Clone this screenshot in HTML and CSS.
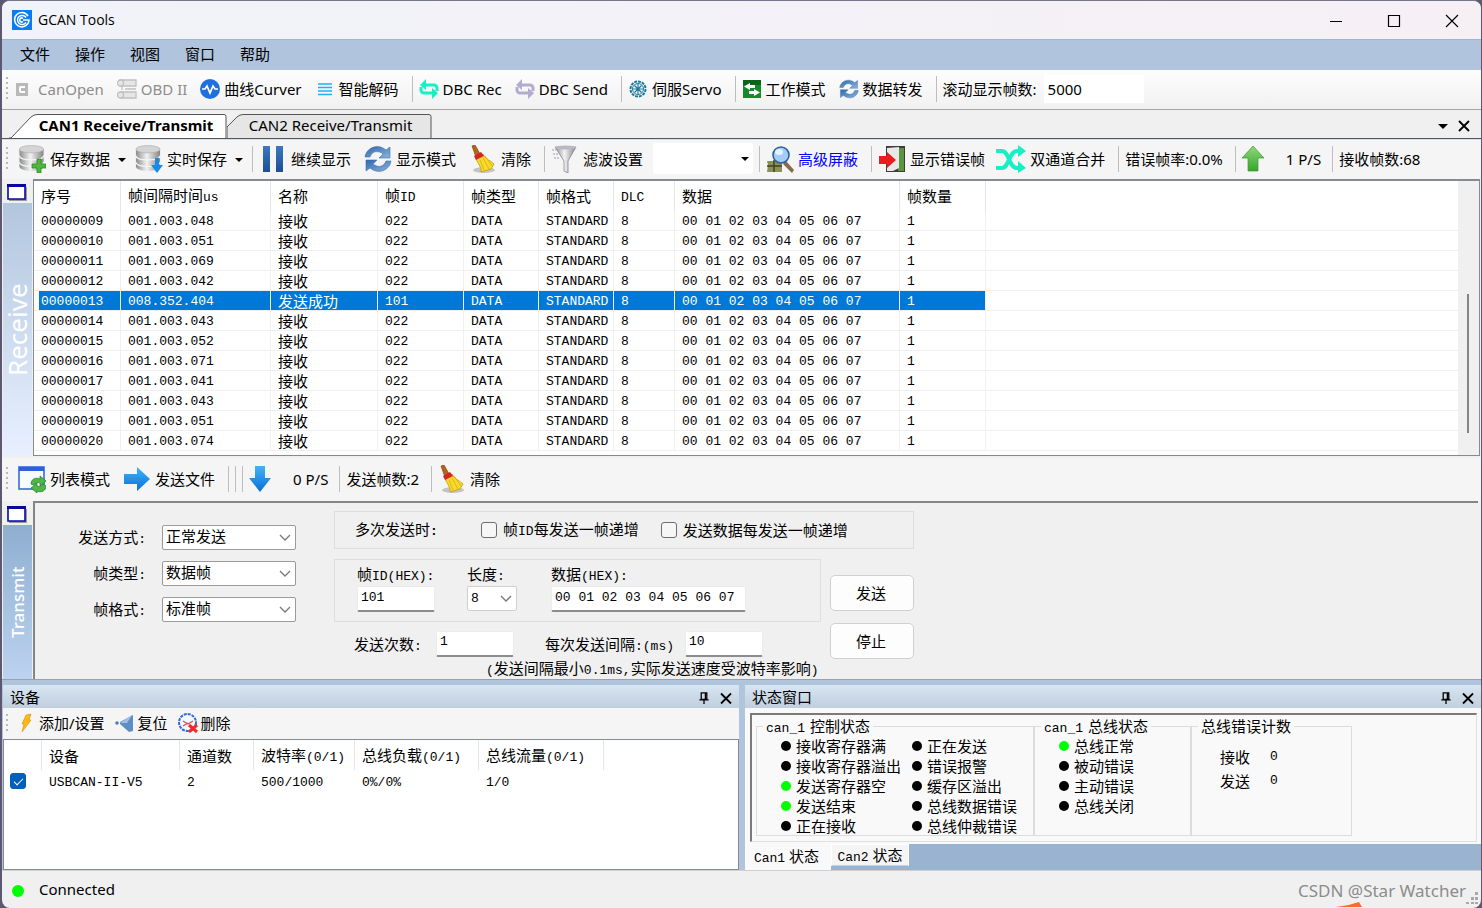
FILE: index.html
```html
<!DOCTYPE html>
<html lang="zh-CN">
<head>
<meta charset="utf-8">
<title>GCAN Tools</title>
<link rel="stylesheet" href="styles.css">
</head>
<body>
<svg class="defs" aria-hidden="true">
  <defs>
    <linearGradient id="steel" x1="0" x2="1"><stop offset="0" stop-color="#8c8c8c"/><stop offset=".45" stop-color="#f2f2f2"/><stop offset="1" stop-color="#858585"/></linearGradient>
    <linearGradient id="blueV" x1="0" y1="0" x2="0" y2="1"><stop offset="0" stop-color="#3fb4fb"/><stop offset="1" stop-color="#0a6fd6"/></linearGradient>
    <linearGradient id="greenV" x1="0" y1="0" x2="0" y2="1"><stop offset="0" stop-color="#8fd97a"/><stop offset="1" stop-color="#36a52c"/></linearGradient>
    <linearGradient id="navyV" x1="0" y1="0" x2="0" y2="1"><stop offset="0" stop-color="#3d78bd"/><stop offset="1" stop-color="#1b4f96"/></linearGradient>
    <linearGradient id="syncV" x1="0" y1="0" x2="1" y2="1"><stop offset="0" stop-color="#2f68ad"/><stop offset="1" stop-color="#8db4de"/></linearGradient>
    <symbol id="i-db" viewBox="0 0 28 28">
      <path d="M1 18v5c0 3 5 5 13 5s13-2 13-5v-5z" fill="url(#steel)"/>
      <path d="M1 18c0 3 5 5 13 5s13-2 13-5" fill="none" stroke="#f4f4f4" stroke-width="1.500"/>
      <path d="M1 12v5c0 3 5 5 13 5s13-2 13-5v-5z" fill="url(#steel)"/>
      <path d="M1 11c0 3 5 5 13 5s13-2 13-5" fill="none" stroke="#f4f4f4" stroke-width="1.500"/>
      <path d="M1 4v6c0 3 5 5 13 5s13-2 13-5V4z" fill="url(#steel)"/>
      <ellipse cx="14" cy="4.500" rx="13" ry="4" fill="#d4d4d4" stroke="#aaa" stroke-width=".6"/>
    </symbol>
    <symbol id="i-sync" viewBox="0 0 28 28">
      <path d="M1 12C2 4 11-1 19 3l3 2 4-3v11H15l4-4C14 5 8 6 6 12z" fill="url(#syncV)" stroke="#4173ad" stroke-width=".6"/>
      <path d="M27 16c-1 8-10 13-18 9l-3-2-4 3V15h11l-4 4c5 4 11 3 13-3z" fill="url(#syncV)" stroke="#4173ad" stroke-width=".6"/>
    </symbol>
    <symbol id="i-broom" viewBox="0 0 28 28">
      <ellipse cx="15" cy="25" rx="11" ry="3" fill="#c4c4c4"/>
      <path d="M3 1l3-1 5 9-4 3z" fill="#b5651d" stroke="#7c3f0c" stroke-width=".7"/>
      <path d="M7 13l7-4c2 5 7 6 11 10l-3 5-10 3c1-5-4-9-5-14z" fill="#f8d92e" stroke="#c79a08" stroke-width=".8"/>
      <path d="M11 15l4 10m-1-12l6 11m-4-13l7 10" stroke="#d8ac10" stroke-width=".8" fill="none"/>
      <path d="M5 11l7-4 3 4-8 4z" fill="#d42525"/>
    </symbol>
    <symbol id="i-loop" viewBox="0 0 20 20">
      <path d="M18 12V9a3 3 0 0 0-3-3H6M2 8v3a3 3 0 0 0 3 3h9" fill="none" stroke="currentColor" stroke-width="3"/>
      <path d="M7 0v11L1 6zM13 9v11l6-6z" fill="currentColor"/>
    </symbol>
    <symbol id="i-pin" viewBox="0 0 12 14"><path d="M3 1h6v7H3zM7.500 1v7M1 8.500h10M6 8v5" fill="none" stroke="#000" stroke-width="1.400"/></symbol>
    <symbol id="i-x" viewBox="0 0 12 12"><path d="M1 1l10 10M11 1L1 11" fill="none" stroke="#000" stroke-width="1.800"/></symbol>
    <symbol id="i-chev" viewBox="0 0 12 8"><path d="M1 1l5 5 5-5" fill="none" stroke="#777" stroke-width="1.300"/></symbol>
    <symbol id="i-win" viewBox="0 0 20 17"><path d="M2 3h18v14H2z" fill="#9a9a9a"/><path d="M1 1h17v14H1z" fill="#fff" stroke="#0808a0" stroke-width="1.600"/><path d="M0 0h19v3H0z" fill="#0808a0"/></symbol>
  </defs>
</svg>
<div class="window">
  <header class="titlebar">
    <svg class="logo" viewBox="0 0 20 20"><path d="M0 0h20v20H0z" fill="#0a7cf0"/><path d="M16 6A7.200 7.200 0 1 0 17 10h-6M14 7.500A4.600 4.600 0 1 0 14 12.500M11 8.500a2 2 0 1 0 0 3" fill="none" stroke="#fff" stroke-width="1.500"/></svg>
    <h1>GCAN Tools</h1>
    <div class="winbtns">
      <button aria-label="最小化"><svg viewBox="0 0 14 14"><path d="M1 7.500h12" stroke="#000" fill="none"/></svg></button>
      <button aria-label="最大化"><svg viewBox="0 0 14 14"><path d="M1.500 1.500h11v11h-11z" stroke="#000" stroke-width="1.200" fill="none"/></svg></button>
      <button aria-label="关闭"><svg viewBox="0 0 14 14"><path d="M1 1l12 12M13 1L1 13" stroke="#000" stroke-width="1.200" fill="none"/></svg></button>
    </div>
  </header>
  <nav class="menubar"><button>文件</button><button>操作</button><button>视图</button><button>窗口</button><button>帮助</button></nav>

  <div class="toolbar main">
    <i class="grip"></i>
    <button class="tool dim canopen"><svg viewBox="0 0 20 20"><path d="M4 4h12v13H4z" fill="#b9b9b9"/><path d="M13 8H9a1 1 0 0 0-1 1v3a1 1 0 0 0 1 1h4" fill="none" stroke="#fff" stroke-width="2"/></svg>CanOpen</button>
    <button class="tool dim"><svg viewBox="0 0 20 20"><g fill="#e6e6e6" stroke="#c0c0c0" stroke-width="1.300"><path d="M3 1h16v6H3zM4 13h15v6H4z"/><circle cx="3.500" cy="4" r="3"/><circle cx="3.500" cy="16" r="3"/><path d="M8 10h11M5 7v4"/></g></svg>OBD II</button>
    <button class="tool"><svg viewBox="0 0 20 20"><circle cx="10" cy="10" r="10" fill="#1f6fe0"/><path d="M2 10h3l2-3 3 7 3-7 2 3h3" fill="none" stroke="#fff" stroke-width="1.700"/></svg>曲线Curver</button>
    <button class="tool"><svg viewBox="0 0 20 20"><path d="M3 5h14M3 8.500h14M3 12h14M3 15.500h14" stroke="#1fb0f5" stroke-width="1.600"/></svg>智能解码</button>
    <i class="sep"></i>
    <button class="tool"><svg class="mint"><use href="#i-loop"/></svg>DBC Rec</button>
    <button class="tool"><svg class="lilac"><use href="#i-loop"/></svg>DBC Send</button>
    <i class="sep"></i>
    <button class="tool"><svg viewBox="0 0 20 20"><circle cx="10" cy="10" r="7.500" fill="none" stroke="#1c7a9c" stroke-width="2" stroke-dasharray="3 .900"/><circle cx="10" cy="10" r="5.500" fill="#fff" stroke="#1c7a9c"/><path d="M10 5v10M5 10h10M6.500 6.500l7 7M13.500 6.500l-7 7" stroke="#1c7a9c" stroke-width="1.200"/></svg>伺服Servo</button>
    <i class="sep"></i>
    <button class="tool"><svg viewBox="0 0 20 20"><path d="M1 1h18v18H1z" fill="#168a2a"/><path d="M1 1h18v5H1z" fill="#0b6417"/><path d="M8 4v2h5v3H8v2L2 7.500zM12 10v2H7v3h5v2l6-3.500z" fill="#fff"/></svg>工作模式</button>
    <button class="tool"><svg><use href="#i-sync"/></svg>数据转发</button>
    <i class="sep"></i>
    <label for="roll">滚动显示帧数:</label>
    <input id="roll" class="roll" value="5000">
  </div>

  <div class="tabs">
    <button class="tab on"><svg viewBox="0 0 218 24" preserveAspectRatio="none"><path d="M0 24h2L22 3q3-2.500 6-2.500h187q2 0 2 2V24" fill="#fff" stroke="#555"/></svg><span>CAN1 Receive/Transmit</span></button>
    <button class="tab"><svg viewBox="0 0 206 24" preserveAspectRatio="none"><path d="M0 24V13L10 3q3-2.500 6-2.500h187q2 0 2 2V24" fill="#e6e6e6" stroke="#555"/></svg><span>CAN2 Receive/Transmit</span></button>
    <div class="tabctl">
      <button aria-label="列表"><svg viewBox="0 0 12 12"><path d="M1 4h10L6 9z"/></svg></button>
      <button aria-label="关闭"><svg><use href="#i-x"/></svg></button>
    </div>
  </div>

  <div class="toolbar big">
    <i class="grip"></i>
    <button class="tool"><svg viewBox="0 0 28 28"><use href="#i-db" width="27" height="26"/><path d="M19 14h4v5h5v4h-5v5h-4v-5h-5v-4h5z" fill="#4cb83c" stroke="#24851b" stroke-width=".7"/></svg>保存数据<b class="caret"></b></button>
    <button class="tool"><svg viewBox="0 0 28 28"><use href="#i-db" width="26" height="26"/><path d="M20 13h4v7h4l-6 8-6-8h4z" fill="#188be6"/></svg>实时保存<b class="caret"></b></button>
    <i class="sep"></i>
    <button class="tool"><svg viewBox="0 0 28 28"><path d="M4 1h7v26H4zM17 1h7v26h-7z" fill="url(#navyV)"/></svg>继续显示</button>
    <button class="tool"><svg><use href="#i-sync"/></svg>显示模式</button>
    <button class="tool"><svg><use href="#i-broom"/></svg>清除</button>
    <i class="sep"></i>
    <button class="tool"><svg viewBox="0 0 28 28"><path d="M4 2h21l-8 14v12l-4-2V16z" fill="url(#steel)" stroke="#85859a" stroke-width=".8"/><ellipse cx="14.500" cy="2.500" rx="10.500" ry="2" fill="#b9b9c6"/><path d="M1 5h4M2 9h5M3 13h6" stroke="#9a9aaa" stroke-dasharray="2 1"/></svg>滤波设置</button>
    <div class="combo filter"><select aria-label="滤波"><option></option></select><b class="caret"></b></div>
    <i class="sep"></i>
    <button class="tool link"><svg viewBox="0 0 28 28"><path d="M1 16h15v11H1l1-7z" fill="#8d8f58"/><path d="M1 21h15M8 15v12" stroke="#3f4220" stroke-width="1.500"/><path d="M20 16l8 9-2 3-9-9z" fill="#8a6a4a"/><circle cx="15" cy="10" r="8" fill="#a4cdf5" stroke="#2f5f9e" stroke-width="1.600"/><ellipse cx="13" cy="7" rx="4" ry="3" fill="#e4f2ff"/></svg>高级屏蔽</button>
    <i class="sep"></i>
    <button class="tool"><svg viewBox="0 0 28 28"><path d="M8 1h19v26H8z" fill="#3c3c3c"/><path d="M20 3h6v23h-6z" fill="#5c9440"/><path d="M9 3l12-1v21l-6 3H9z" fill="#e8e8e8"/><path d="M1 11h8V7l9 8-9 8v-4H1z" fill="#ea1c1c"/></svg>显示错误帧</button>
    <button class="tool shuf"><svg class="wide mint" viewBox="0 0 30 28"><path d="M0 6h6c7 0 7 17 15 17h3M0 23h6c7 0 7-17 15-17h3" fill="none" stroke="currentColor" stroke-width="4"/><path d="M22 0l8 6-8 6zM22 16l8 7-8 5z" fill="currentColor"/></svg>双通道合并</button>
    <i class="sep"></i>
    <span>错误帧率:0.0%</span>
    <i class="sep"></i>
    <svg class="arrow" viewBox="0 0 22 26"><path d="M11 0l11 12h-6v13H6V12H0z" fill="url(#greenV)" stroke="#3f9a35" stroke-width=".7"/></svg>
    <span class="rate">1 P/S</span>
    <i class="sep"></i>
    <span>接收帧数:68</span>
  </div>

  <section class="receive">
    <aside class="rail light"><button aria-label="窗口"><svg><use href="#i-win"/></svg></button><div class="railtext">Receive</div></aside>
    <div class="list">
      <div class="rows">
      <table class="frames">
        <colgroup><col class="c87"><col class="c150"><col class="c107"><col class="c86"><col class="c75"><col class="c75"><col class="c61"><col class="c225"><col class="c86"><col></colgroup>
        <thead><tr><th>序号</th><th>帧间隔时间<span class="m">us</span></th><th>名称</th><th>帧<span class="m">ID</span></th><th>帧类型</th><th>帧格式</th><th><span class="m">DLC</span></th><th>数据</th><th>帧数量</th><th></th></tr></thead>
        <tbody>
        <tr><td>00000009</td><td>001.003.048</td><td class="z">接收</td><td>022</td><td>DATA</td><td>STANDARD</td><td>8</td><td>00 01 02 03 04 05 06 07</td><td>1</td><td></td></tr>
        <tr><td>00000010</td><td>001.003.051</td><td class="z">接收</td><td>022</td><td>DATA</td><td>STANDARD</td><td>8</td><td>00 01 02 03 04 05 06 07</td><td>1</td><td></td></tr>
        <tr><td>00000011</td><td>001.003.069</td><td class="z">接收</td><td>022</td><td>DATA</td><td>STANDARD</td><td>8</td><td>00 01 02 03 04 05 06 07</td><td>1</td><td></td></tr>
        <tr><td>00000012</td><td>001.003.042</td><td class="z">接收</td><td>022</td><td>DATA</td><td>STANDARD</td><td>8</td><td>00 01 02 03 04 05 06 07</td><td>1</td><td></td></tr>
        <tr class="sel"><td>00000013</td><td>008.352.404</td><td class="z">发送成功</td><td>101</td><td>DATA</td><td>STANDARD</td><td>8</td><td>00 01 02 03 04 05 06 07</td><td>1</td><td></td></tr>
        <tr><td>00000014</td><td>001.003.043</td><td class="z">接收</td><td>022</td><td>DATA</td><td>STANDARD</td><td>8</td><td>00 01 02 03 04 05 06 07</td><td>1</td><td></td></tr>
        <tr><td>00000015</td><td>001.003.052</td><td class="z">接收</td><td>022</td><td>DATA</td><td>STANDARD</td><td>8</td><td>00 01 02 03 04 05 06 07</td><td>1</td><td></td></tr>
        <tr><td>00000016</td><td>001.003.071</td><td class="z">接收</td><td>022</td><td>DATA</td><td>STANDARD</td><td>8</td><td>00 01 02 03 04 05 06 07</td><td>1</td><td></td></tr>
        <tr><td>00000017</td><td>001.003.041</td><td class="z">接收</td><td>022</td><td>DATA</td><td>STANDARD</td><td>8</td><td>00 01 02 03 04 05 06 07</td><td>1</td><td></td></tr>
        <tr><td>00000018</td><td>001.003.043</td><td class="z">接收</td><td>022</td><td>DATA</td><td>STANDARD</td><td>8</td><td>00 01 02 03 04 05 06 07</td><td>1</td><td></td></tr>
        <tr><td>00000019</td><td>001.003.051</td><td class="z">接收</td><td>022</td><td>DATA</td><td>STANDARD</td><td>8</td><td>00 01 02 03 04 05 06 07</td><td>1</td><td></td></tr>
        <tr><td>00000020</td><td>001.003.074</td><td class="z">接收</td><td>022</td><td>DATA</td><td>STANDARD</td><td>8</td><td>00 01 02 03 04 05 06 07</td><td>1</td><td></td></tr>
        </tbody>
      </table>
      </div>
      <div class="scroll"><i></i></div>
    </div>
  </section>

  <div class="toolbar big send">
    <i class="grip"></i>
    <button class="tool"><svg viewBox="0 0 28 28"><path d="M1 2h25v22H1z" fill="#f7faff" stroke="#2c62d8" stroke-width="1.500"/><path d="M1 2h25v4H1z" fill="#2c62d8"/><path d="M13 19c0-5 5-7 9-5v-3l6 5-6 5v-3c-3-1-5 0-6 2z" fill="#4db848" stroke="#1d7d1c" stroke-width=".7"/><path d="M28 21c0 5-5 7-9 5v2l-6-5 6-5v3c3 1 5 0 6-2z" fill="#4db848" stroke="#1d7d1c" stroke-width=".7"/></svg>列表模式</button>
    <button class="tool"><svg viewBox="0 0 28 28"><path d="M1 9h13V2l13 12-13 12v-7H1z" fill="url(#blueV)"/></svg>发送文件</button>
    <i class="sep"></i><i class="sep"></i><i class="sep"></i>
    <svg class="arrow" viewBox="0 0 22 26"><path d="M6 0h10v12h6L11 26 0 12h6z" fill="url(#blueV)"/></svg>
    <span class="rate">0 P/S</span>
    <i class="sep"></i>
    <span>发送帧数:2</span>
    <i class="sep"></i>
    <button class="tool"><svg><use href="#i-broom"/></svg>清除</button>
  </div>

  <section class="transmit">
    <aside class="rail"><button aria-label="窗口"><svg><use href="#i-win"/></svg></button><div class="railtext small">Transmit</div></aside>
    <form class="sendform">
      <div class="modes">
        <label for="s1">发送方式<span class="m">:</span></label><div class="combo"><select id="s1"><option>正常发送</option></select><svg><use href="#i-chev"/></svg></div>
        <label for="s2">帧类型<span class="m">:</span></label><div class="combo"><select id="s2"><option>数据帧</option></select><svg><use href="#i-chev"/></svg></div>
        <label for="s3">帧格式<span class="m">:</span></label><div class="combo"><select id="s3"><option>标准帧</option></select><svg><use href="#i-chev"/></svg></div>
      </div>
      <div class="params">
        <div class="box multi"><span>多次发送时<b class="m">:</b></span><label><input type="checkbox"><span>帧<span class="m">ID</span>每发送一帧递增</span></label><label><input type="checkbox">发送数据每发送一帧递增</label></div>
        <div class="fields">
          <div class="box frame">
            <div><label for="fid">帧<span class="m">ID(HEX):</span></label><input id="fid" class="txt" value="101"></div>
            <div><label for="len">长度<span class="m">:</span></label><div class="combo len"><select id="len"><option>8</option></select><svg><use href="#i-chev"/></svg></div></div>
            <div><label for="dat">数据<span class="m">(HEX):</span></label><input id="dat" class="txt data" value="00 01 02 03 04 05 06 07"></div>
          </div>
          <div class="times">
            <label for="cnt">发送次数<span class="m">:</span></label><input id="cnt" class="txt" value="1">
            <label for="gap" class="second">每次发送间隔<span class="m">:(ms)</span></label><input id="gap" class="txt" value="10">
          </div>
          <p class="note"><span class="m">(</span>发送间隔最小<span class="m">0.1ms,</span>实际发送速度受波特率影响<span class="m">)</span></p>
        </div>
        <div class="actions"><button type="button">发送</button><button type="button">停止</button></div>
      </div>
    </form>
  </section>

  <div class="docks">
    <section class="dock">
      <header><h2>设备</h2><button aria-label="固定"><svg><use href="#i-pin"/></svg></button><button aria-label="关闭"><svg><use href="#i-x"/></svg></button></header>
      <div class="toolbar dev">
        <i class="grip"></i>
        <button class="tool"><svg viewBox="0 0 20 20"><path d="M10 2l5-1-2 6h2L6 19l2-8H6z" fill="#fbb817" stroke="#e58b00" stroke-width=".6"/></svg>添加/设置</button>
        <button class="tool"><svg viewBox="0 0 20 20"><path d="M18 2v16l-4 1-9-8v-2z" fill="#5d8fc4"/><path d="M17 2L5 10l7 0z" fill="#9dc0e4"/><circle cx="2" cy="10" r="1.800" fill="#4f80b5"/></svg>复位</button>
        <button class="tool"><svg viewBox="0 0 20 20"><circle cx="9.500" cy="9.500" r="8.500" fill="#f4f8ff" stroke="#3568dc" stroke-width="2" stroke-dasharray="3 1"/><path d="M5 8l5 3 5-3M5 13l5-3" stroke="#d05050" fill="none" stroke-width="1.300"/><path d="M11 12l8 7M19 12l-8 7" stroke="#f02a2a" stroke-width="3"/></svg>删除</button>
      </div>
      <div class="devlist">
        <table>
          <colgroup><col class="d38"><col class="d138"><col class="d74"><col class="d101"><col class="d124"><col class="d125"><col></colgroup>
          <thead><tr><th></th><th>设备</th><th>通道数</th><th>波特率<span class="m">(0/1)</span></th><th>总线负载<span class="m">(0/1)</span></th><th>总线流量<span class="m">(0/1)</span></th><th></th></tr></thead>
          <tbody><tr><td class="ck"><input type="checkbox" checked aria-label="USBCAN-II-V5"></td><td>USBCAN-II-V5</td><td>2</td><td>500/1000</td><td>0%/0%</td><td>1/0</td><td></td></tr></tbody>
        </table>
      </div>
    </section>
    <section class="dock">
      <header><h2>状态窗口</h2><button aria-label="固定"><svg><use href="#i-pin"/></svg></button><button aria-label="关闭"><svg><use href="#i-x"/></svg></button></header>
      <div class="status">
        <div class="sunken">
          <fieldset class="ctl"><legend><span class="m">can_1</span> 控制状态</legend>
            <ul><li>接收寄存器满</li><li>接收寄存器溢出</li><li class="ok">发送寄存器空</li><li class="ok">发送结束</li><li>正在接收</li></ul>
            <ul><li>正在发送</li><li>错误报警</li><li>缓存区溢出</li><li>总线数据错误</li><li>总线仲裁错误</li></ul>
          </fieldset>
          <fieldset class="bus"><legend><span class="m">can_1</span> 总线状态</legend>
            <ul><li class="ok">总线正常</li><li>被动错误</li><li>主动错误</li><li>总线关闭</li></ul>
          </fieldset>
          <fieldset class="err"><legend>总线错误计数</legend>
            <dl><dt>接收</dt><dd>0</dd><dt>发送</dt><dd>0</dd></dl>
          </fieldset>
        </div>
      </div>
      <div class="cantabs"><button class="on"><span class="m">Can1</span> 状态</button><button><span class="m">Can2</span> 状态</button></div>
    </section>
  </div>

  <footer class="statusbar"><i class="led"></i><span>Connected</span><span class="mark">CSDN @Star Watcher</span>
    <svg class="size" viewBox="0 0 12 12"><path d="M9 0h3v3H9zM5 5h3v3H5zM9 5h3v3H9zM0 10h3v2H0zM5 10h3v2H5zM9 10h3v2H9z" fill="#a8a8a8"/></svg>
    <svg class="orange" viewBox="0 0 26 5"><path d="M0 5q12-1 23-5l3 5z" fill="#f96a35"/></svg>
  </footer>
</div>
</body>
</html>
```
FILE: styles.css
```css
* { box-sizing: border-box; }
body {
  margin: 0;
  background: #5d5872;
  font: 15px/20px "Noto Sans", "Noto Sans CJK SC", sans-serif;
  color: #000;
}
button, input, select { font: inherit; color: inherit; margin: 0; }
button { background: none; border: 0; padding: 0; white-space: nowrap; }
h1, h2, p, ul, dl, dd { margin: 0; padding: 0; font-weight: normal; }
.defs { position: absolute; width: 0; height: 0; }
.m { font-family: "Liberation Mono", monospace; font-size: 13px; }

.window {
  display: flex;
  flex-direction: column;
  height: 100vh;
  min-height: 900px;
  padding-bottom: 1px;
  margin: 0 1px 0 2px;
  border-top: 1px solid #77758a;
  border-radius: 8px;
  background: #f0f0f0;
  overflow: hidden;
}
.window > * { flex: none; }

.titlebar {
  display: flex;
  align-items: center;
  height: 39px;
  padding-left: 10px;
  background: linear-gradient(90deg, #f0f3f9, #f6f0f5);
  border-bottom: 1px solid #a3b4cd;
}
.titlebar h1 { flex: 1; margin-left: 6px; font: 14px/20px "Open Sans", sans-serif; }
.logo { width: 20px; height: 20px; }
.winbtns { display: flex; padding-bottom: 2px; }
.winbtns button { width: 58px; height: 36px; }
.winbtns svg { width: 14px; height: 14px; vertical-align: middle; }

.menubar { display: flex; gap: 25px; height: 30px; padding: 0 0 2px 18px; background: #b0c4de; }

.toolbar { display: flex; align-items: center; padding-bottom: 2px; white-space: nowrap; background: #f5f5f5; }
.grip {
  width: 2px;
  height: 24px;
  margin: 0 8px 0 4px;
  background: repeating-linear-gradient(#b8b8b8 0 2px, transparent 2px 5px);
}
.sep { width: 1px; height: 26px; margin-right: 6px; background: #bdbdbd; }
.tool { display: flex; align-items: center; gap: 4px; margin-right: 13px; }
.tool svg { flex: none; width: 20px; height: 20px; }
.dim { color: #8d8d8d; }
.mint { color: #17f0c5; }
.lilac { color: #b3acd0; }
.link { color: #00f; }
.main { height: 40px; background: linear-gradient(#fdfdfd, #f1f1f1); border-bottom: 1px solid #a5a5a5; }
.main .canopen svg { margin-left: -4px; margin-right: 2px; }
.roll { width: 100px; height: 28px; margin-left: 7px; padding: 0 4px; border: 0; background: #fff; }

.tabs { display: flex; align-items: flex-end; height: 29px; padding-left: 7px; border-bottom: 1px solid #555; }
.tab { position: relative; height: 24px; padding: 0 16px 2px 18px; }
.tab + .tab { width: 205px; }
.tab svg { position: absolute; inset: 0; width: 100%; height: 100%; }
.tab span { position: relative; }
.tab.on { width: 218px; padding: 0 8px 2px 24px; font-weight: bold; }
.tabctl { display: flex; gap: 9px; margin-left: auto; padding: 0 11px 4px 0; }
.tabctl svg { width: 12px; height: 12px; vertical-align: middle; }

.big { height: 40px; border-top: 1px solid #d5e0f0; }
.big .grip { margin-right: 10px; }
.big .tool svg { width: 28px; height: 28px; }
.big .tool svg.wide { width: 30px; }
.big .shuf { margin-left: -2px; }
.caret { width: 0; height: 0; border: 4px solid transparent; border-top-color: #000; border-bottom: 0; }
.tool .caret { margin: 2px -4px 0 4px; }
.big > span { margin-right: 12px; }
.arrow { width: 22px; height: 26px; }
.big > .rate { margin: 0 11px 0 22px; }
.combo { position: relative; width: 134px; height: 25px; }
.combo select {
  display: block;
  width: 100%;
  height: 100%;
  padding: 0 3px 3px;
  appearance: none;
  border: 1px solid #9a9a9a;
  border-radius: 2px;
  background: #fff;
  line-height: 20px;
}
.combo svg { position: absolute; right: 5px; top: 9px; width: 12px; height: 8px; pointer-events: none; }
.filter { width: 100px; height: 31px; margin: 0 6px 0 -3px; }
.filter select { border: 0; }
.filter .caret { position: absolute; right: 4px; top: 14px; }

.window > .receive { flex: 1 1 0; min-height: 0; display: flex; margin-bottom: 2px; }
.rail { display: flex; flex-direction: column; flex: none; width: 31px; padding: 0 1px; }
.rail button { height: 24px; text-align: left; padding-left: 4px; }
.rail svg { width: 20px; height: 17px; vertical-align: middle; }
.railtext {
  flex: 1;
  writing-mode: vertical-rl;
  transform: rotate(180deg);
  text-align: center;
  font-size: 26px;
  line-height: 29px;
  color: #fff;
  background: linear-gradient(0deg, #8fafd0, #bcd2f0);
}
.light .railtext { background: linear-gradient(0deg, #b2c6de, #e8f0ff); }
.railtext.small { font-size: 17px; font-weight: 500; }
.list { flex: 1; min-width: 0; display: flex; border: 1px solid #858b93; border-top-width: 2px; margin-right: 1px; background: #fff; }
.rows { flex: 1; min-width: 0; overflow: hidden; }
table { width: 100%; table-layout: fixed; border-collapse: separate; border-spacing: 0; }
th { height: 30px; padding: 0 0 0 7px; text-align: left; font-weight: normal; white-space: nowrap; border-right: 1px solid #e6e6e6; }
td {
  height: 20px;
  padding: 2px 0 0 7px;
  font: 13px/17px "Liberation Mono", monospace;
  vertical-align: bottom;
  white-space: nowrap;
  border-right: 1px solid #f0f0f0;
  border-bottom: 1px solid #f0f0f0;
}
td.z { padding-top: 0; font: 15px/19px "Noto Sans CJK SC", sans-serif; }
th:last-child, td:last-child { border-right: 0; }
.sel td:not(:last-child) { background: #0078d7; color: #fff; }
.sel td:first-child { background: linear-gradient(90deg, #fff 5px, #0078d7 5px); }
.c87 { width: 87px; } .c150 { width: 150px; } .c107 { width: 107px; } .c86 { width: 86px; }
.c75 { width: 75px; } .c61 { width: 61px; } .c225 { width: 225px; }
.scroll { width: 21px; padding-top: 113px; background: #f0f0f0; }
.scroll i { display: block; width: 2px; height: 139px; margin-left: 9px; background: #858585; }

.send { height: 43px; border-top: 0; }

.transmit { display: flex; height: 179px; border-bottom: 1px solid #a0a0a0; }
.sendform {
  flex: 1;
  display: flex;
  align-items: flex-start;
  gap: 38px;
  margin-right: 3px;
  border: 2px solid #858585;
  border-width: 2px 0 0 2px;
  overflow: hidden;
}
.modes {
  display: grid;
  grid-template-columns: 111px 134px;
  column-gap: 16px;
  row-gap: 11px;
  padding-top: 22px;
  text-align: right;
}
.modes label { padding-top: 2px; }
.params { display: grid; grid-template-columns: 487px 84px; column-gap: 9px; row-gap: 10px; padding-top: 8px; }
.box { border: 1px solid #dedede; }
.multi { grid-column: 1 / 3; display: flex; align-items: center; height: 38px; padding-left: 20px; }
.multi label { display: flex; align-items: center; margin-right: 22px; }
.multi > span { width: 126px; }
input[type="checkbox"] {
  appearance: none;
  width: 16px;
  height: 16px;
  margin: 0 6px 0 0;
  border: 1px solid #6e6e6e;
  border-radius: 3px;
  background: #f6f6f6;
}
input[type="checkbox"]:checked { border-color: #005fb8; background: #005fb8; }
.frame { display: flex; height: 63px; padding: 4px 0 0 22px; }
.frame > div { width: 110px; }
.frame > div + div { width: 84px; }
.frame label { display: block; height: 22px; }
.txt {
  display: block;
  width: 78px;
  height: 26px;
  padding: 0 3px 3px;
  border: 1px solid #ececec;
  border-bottom: 2px solid #8c8c8c;
  border-radius: 2px;
  background: #fff;
  font: 13px/18px "Liberation Mono", monospace;
}
.data { width: 195px; }
.len { width: 50px; }
.len select { padding-bottom: 0; border-color: #d0d0d0; font: 13px/18px "Liberation Mono", monospace; }
.times { display: flex; align-items: center; padding: 8px 0 0 20px; }
.times label { width: 82px; padding-top: 4px; white-space: nowrap; }
.times .second { width: 140px; margin-left: 31px; }
.note { padding: 2px 0 0 152px; line-height: 18px; white-space: nowrap; }
.actions { display: flex; flex-direction: column; gap: 12px; padding-top: 16px; }
.actions button { height: 36px; padding-right: 2px; border: 1px solid #d0d0d0; border-radius: 5px; background: #fdfdfd; }

.docks { display: grid; grid-template-columns: 1fr 1fr; column-gap: 6px; padding: 5px 0 0 1px; background: #b0c4de; }
.dock { display: flex; flex-direction: column; min-width: 0; background: #f5f5f5; }
.dock header { display: flex; align-items: center; gap: 10px; height: 23px; padding: 0 7px; background: linear-gradient(#d8e5f2, #c0cfde); }
.dock h2 { flex: 1; font-size: 15px; line-height: 20px; }
.dock header svg { width: 12px; height: 13px; vertical-align: middle; }
.dev { height: 31px; }
.dev .grip { height: 17px; margin-left: 3px; }
.dev .tool { gap: 3px; margin-right: 10px; }
.devlist { height: 131px; border: 1px solid #858b93; background: #fff; }
.devlist th { padding-top: 2px; }
.devlist td { height: 22px; padding-top: 3px; border: 0; vertical-align: middle; }
.devlist td.ck { padding: 0 0 0 6px; line-height: 0; }
.devlist input { margin: 0; vertical-align: middle; position: relative; }
.devlist input::after {
  content: "";
  position: absolute;
  left: 3px;
  top: 4px;
  width: 8px;
  height: 4px;
  border: solid #fff;
  border-width: 0 0 1px 1px;
  transform: rotate(-45deg);
}
.d38 { width: 38px; } .d138 { width: 138px; } .d74 { width: 74px; } .d101 { width: 101px; }
.d124 { width: 124px; } .d125 { width: 125px; }

.status { height: 136px; padding: 5px 4px 2px 5px; background: #f9f9f9; }
.sunken { display: flex; height: 129px; padding: 1px 0 0 4px; border: 1px solid #e0e0e0; border-top: 2px solid #7a7a7a; border-left: 2px solid #7a7a7a; }
fieldset { min-width: 0; height: 120px; margin: 0; padding: 0; border: 1px solid #dcdcdc; display: flex; }
legend { height: 20px; margin-left: 6px; padding: 0 3px; white-space: nowrap; }
legend .m { margin-right: 1px; }
.ctl { width: 278px; } .bus { width: 157px; } .err { width: 161px; }
.ctl ul { width: 131px; margin-left: 24px; }
.ctl ul + ul { width: auto; margin-left: 0; }
.bus ul { margin-left: 24px; }
li { display: flex; align-items: center; gap: 5px; list-style: none; white-space: nowrap; }
li::before { content: ""; width: 10px; height: 10px; border-radius: 50%; background: #000; }
li.ok::before, .led { background: #0f0; }
dl { display: grid; grid-template-columns: 50px 20px; align-content: start; row-gap: 4px; padding: 11px 0 0 28px; }
dd { font: 13px/20px "Liberation Mono", monospace; }
.cantabs { flex: 1; display: flex; align-items: flex-start; background: #99b3d1; }
.cantabs button { height: 22px; width: 78px; padding-bottom: 2px; background: #f5f5f5; border: 1px solid #fff; border-bottom-color: #d0d0d0; }
.cantabs .on { height: 26px; width: 86px; padding: 0 3px 0 0; background: #f9f9f9; border: 0; }

.statusbar { position: relative; display: flex; align-items: center; height: 37px; padding: 0 3px 0 10px; border-top: 1px solid #d0d0d0; }
.led { width: 12px; height: 12px; margin: 4px 15px 0 0; border-radius: 50%; }
.mark { margin-left: auto; padding-top: 4px; font-size: 17px; color: #8c8c8c; }
.size { align-self: flex-end; width: 12px; height: 12px; margin-bottom: 3px; }
.orange { position: absolute; right: 119px; bottom: 0; width: 26px; height: 5px; }
```
